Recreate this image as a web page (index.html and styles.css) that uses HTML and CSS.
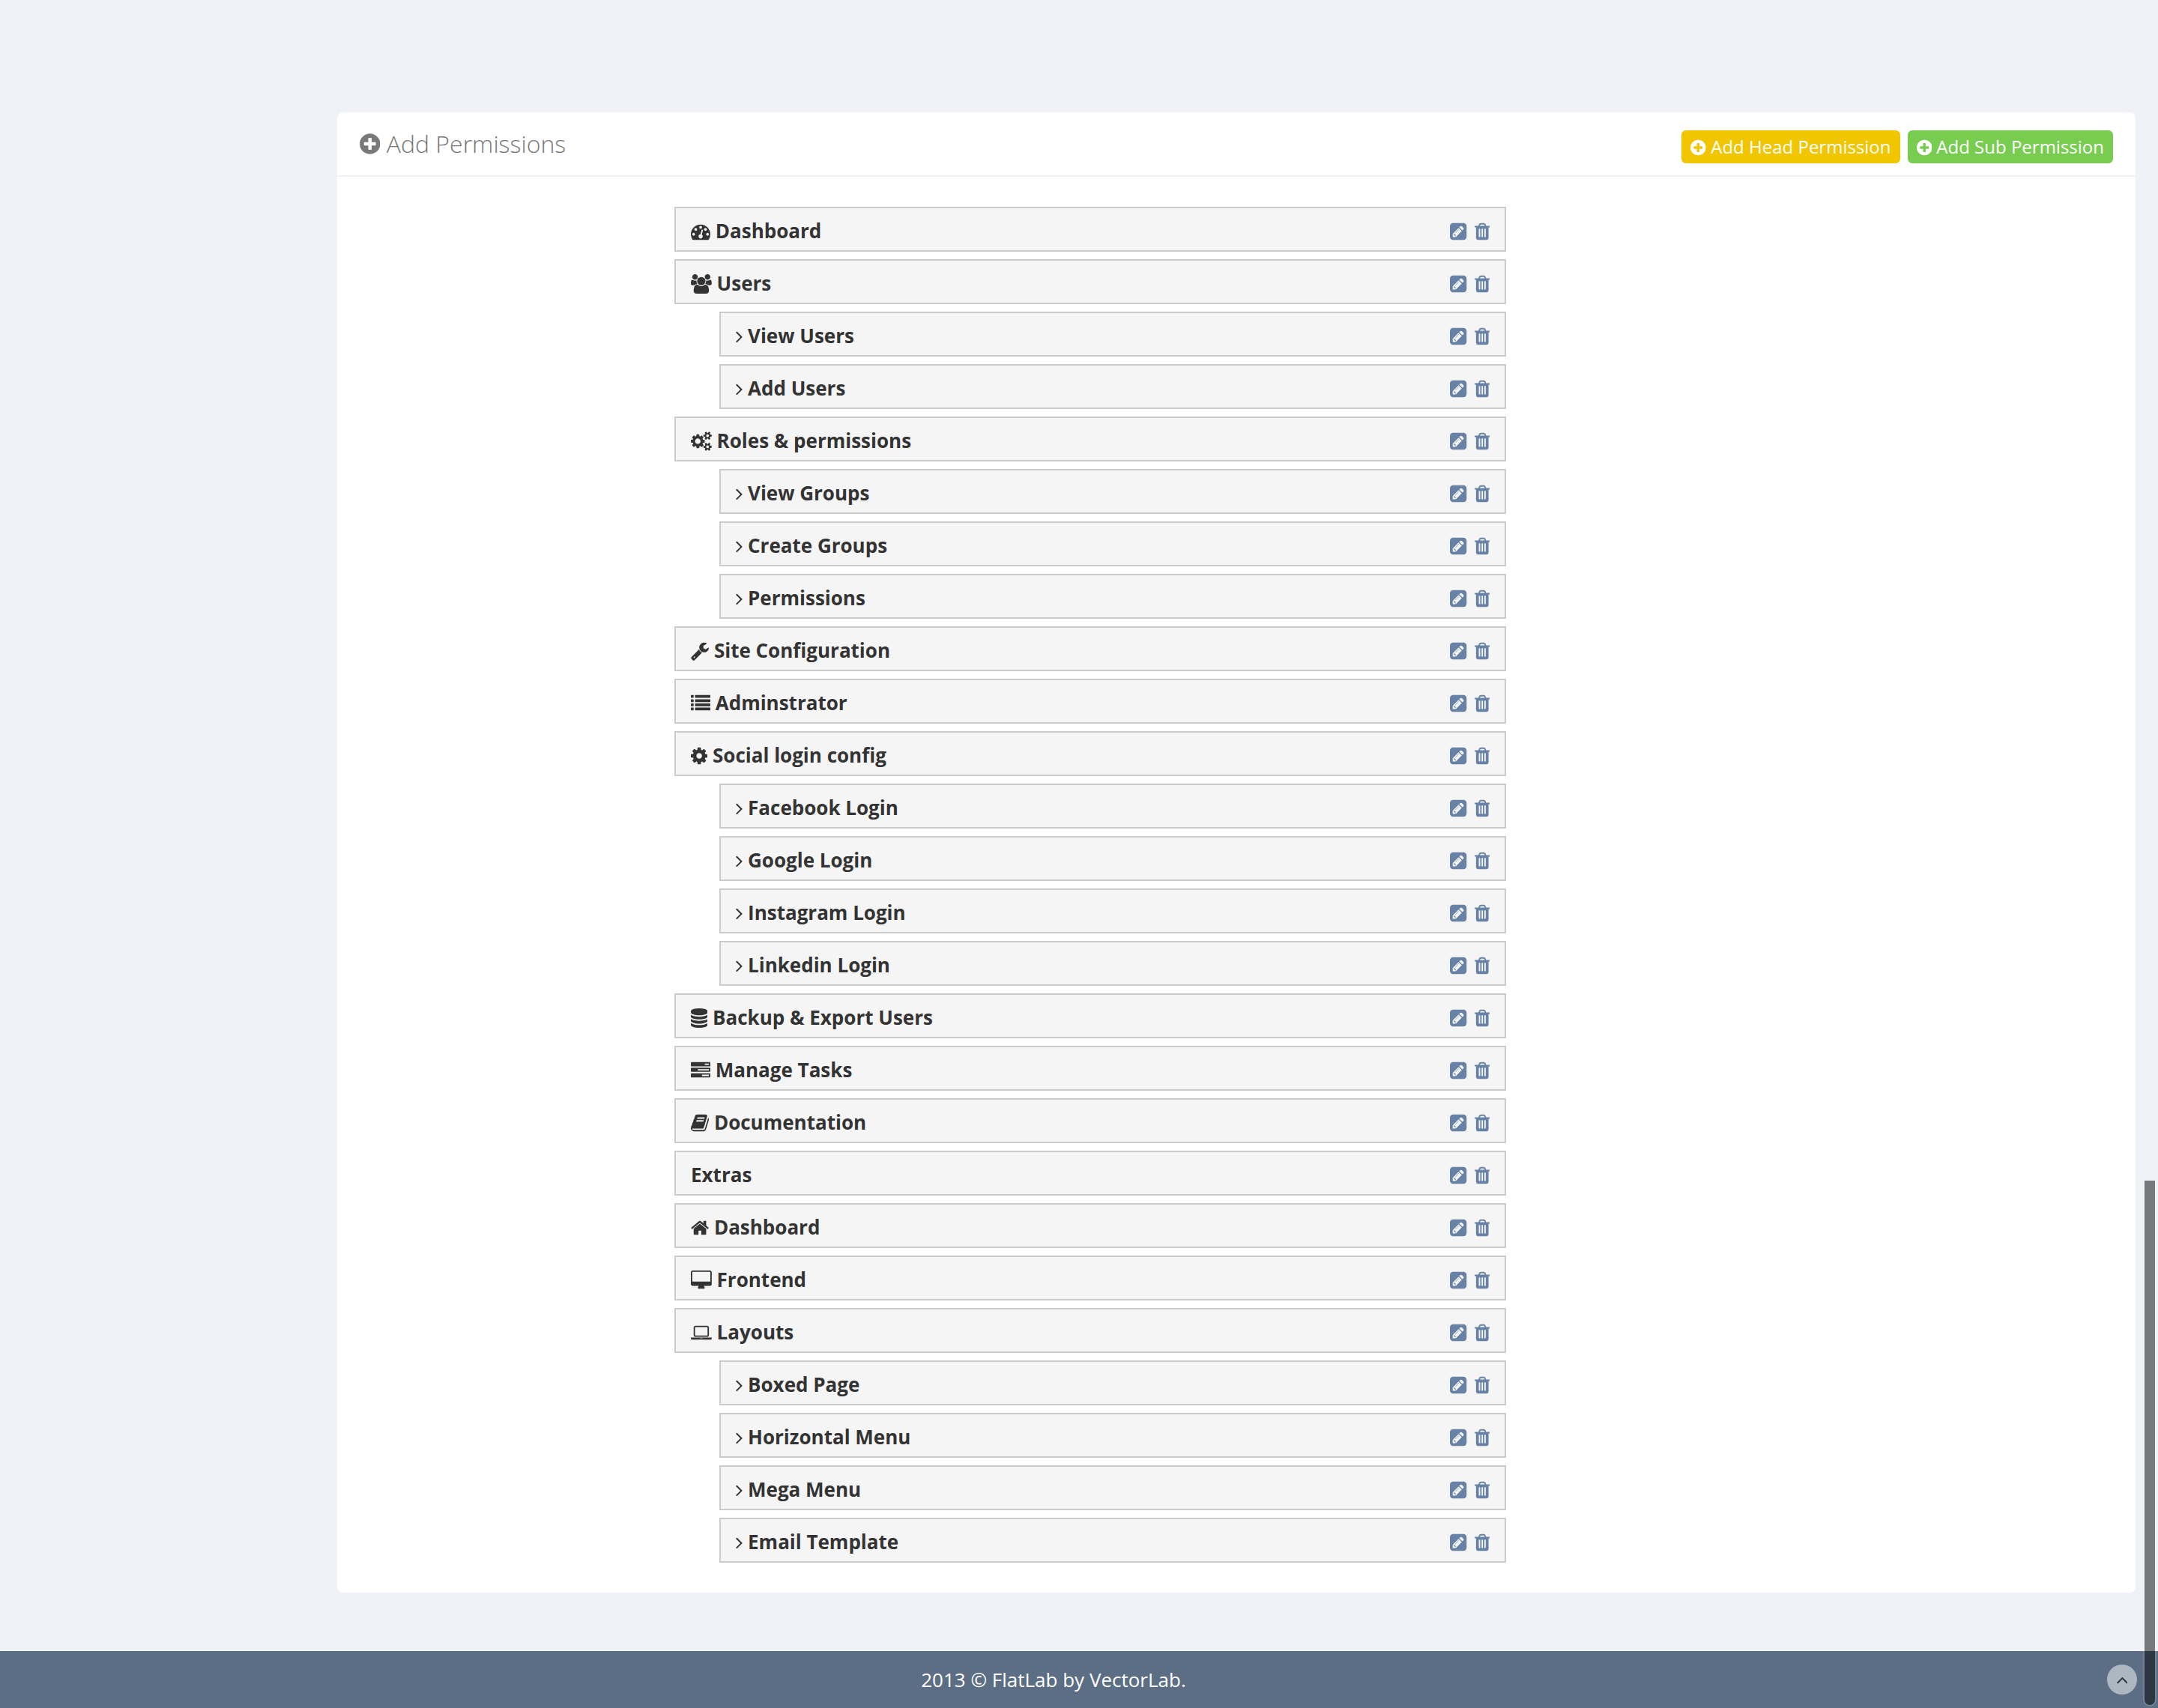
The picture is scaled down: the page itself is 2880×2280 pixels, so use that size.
FILE: index.html
```html
<!DOCTYPE html>
<html lang="en">
<head>
<meta charset="utf-8">
<meta name="viewport" content="width=device-width, initial-scale=1">
<title>Add Permissions</title>
<link rel="stylesheet" href="styles.css">
</head>
<body>
<svg class="sprite" aria-hidden="true">
<defs>
<path id="i-dash" d="M384 1152q0-53-37.5-90.5t-90.5-37.5-90.5 37.5-37.5 90.5 37.5 90.5 90.5 37.5 90.5-37.5 37.5-90.5zm192-448q0-53-37.5-90.5t-90.5-37.5-90.5 37.5-37.5 90.5 37.5 90.5 90.5 37.5 90.5-37.5 37.5-90.5zm428 481l101-382q6-26-7.5-48.5t-38.5-29.5-48 6.5-30 39.5l-101 382q-60 5-107 43.5t-63 98.5q-20 77 20 146t117 89 146-20 89-117q16-60-6-117t-72-91zm660-33q0-53-37.5-90.5t-90.5-37.5-90.5 37.5-37.5 90.5 37.5 90.5 90.5 37.5 90.5-37.5 37.5-90.5zm-640-640q0-53-37.5-90.5t-90.5-37.5-90.5 37.5-37.5 90.5 37.5 90.5 90.5 37.5 90.5-37.5 37.5-90.5zm448 192q0-53-37.5-90.5t-90.5-37.5-90.5 37.5-37.5 90.5 37.5 90.5 90.5 37.5 90.5-37.5 37.5-90.5zm320 448q0 261-141 483-19 29-54 29h-1402q-35 0-54-29-141-221-141-483 0-182 71-348t191-286 286-191 348-71 348 71 286 191 191 286 71 348z"/>
<path id="i-users" d="M529 896q-162 5-265 128h-134q-82 0-138-40.5t-56-118.5q0-353 124-353 6 0 43.5 21t97.5 42.5 119 21.5q67 0 133-23-5 37-5 66 0 139 81 256zm1071 637q0 120-73 189.5t-194 69.5h-874q-121 0-194-69.5t-73-189.5q0-53 3.5-103.5t14-109 26.5-108.5 43-97.5 62-81 85.5-53.5 111.5-20q10 0 43 21.5t73 48 107 48 135 21.5 135-21.5 107-48 73-48 43-21.5q61 0 111.5 20t85.5 53.5 62 81 43 97.5 26.5 108.5 14 109 3.5 103.5zm-1024-1277q0 106-75 181t-181 75-181-75-75-181 75-181 181-75 181 75 75 181zm704 384q0 159-112.5 271.5t-271.5 112.5-271.5-112.5-112.5-271.5 112.5-271.5 271.5-112.5 271.5 112.5 112.5 271.5zm576 225q0 78-56 118.5t-138 40.5h-134q-103-123-265-128 81-117 81-256 0-29-5-66 66 23 133 23 59 0 119-21.5t97.5-42.5 43.5-21q124 0 124 353zm-128-609q0 106-75 181t-181 75-181-75-75-181 75-181 181-75 181 75 75 181z"/>
<path id="i-cogs" d="M832 896q0-106-75-181t-181-75-181 75-75 181 75 181 181 75 181-75 75-181zm768 512q0-52-38-90t-90-38-90 38-38 90q0 53 37.5 90.5t90.5 37.5 90.5-37.5 37.5-90.5zm0-1024q0-52-38-90t-90-38-90 38-38 90q0 53 37.5 90.5t90.5 37.5 90.5-37.5 37.5-90.5zm-384 421v185q0 10-7 19.5t-16 10.5l-155 24q-11 35-32 76 34 48 90 115 7 11 7 20 0 12-7 19-23 30-82.5 89.5t-78.5 59.5q-11 0-21-7l-115-90q-37 19-77 31-11 108-23 155-7 24-30 24h-186q-11 0-20-7.5t-10-17.5l-23-153q-34-10-75-31l-118 89q-7 7-20 7-11 0-21-8-144-133-144-160 0-9 7-19 10-14 41-53t47-61q-23-44-35-82l-152-24q-10-1-17-9.5t-7-19.5v-185q0-10 7-19.5t16-10.5l155-24q11-35 32-76-34-48-90-115-7-11-7-20 0-12 7-20 22-30 82-89t79-59q11 0 21 7l115 90q34-18 77-32 11-108 23-154 7-24 30-24h186q11 0 20 7.5t10 17.5l23 153q34 10 75 31l118-89q8-7 20-7 11 0 21 8 144 133 144 160 0 8-7 19-12 16-42 54t-45 60q23 48 34 82l152 23q10 2 17 10.5t7 19.5zm640 533v140q0 16-149 31-12 27-30 52 51 113 51 138 0 4-4 7-122 71-124 71-8 0-46-47t-52-68q-20 2-30 2t-30-2q-14 21-52 68t-46 47q-2 0-124-71-4-3-4-7 0-25 51-138-18-25-30-52-149-15-149-31v-140q0-16 149-31 13-29 30-52-51-113-51-138 0-4 4-7 4-2 35-20t59-34 30-16q8 0 46 46.5t52 67.5q20-2 30-2t30 2q51-71 92-112l6-2q4 0 124 70 4 3 4 7 0 25-51 138 17 23 30 52 149 15 149 31zm0-1024v140q0 16-149 31-12 27-30 52 51 113 51 138 0 4-4 7-122 71-124 71-8 0-46-47t-52-68q-20 2-30 2t-30-2q-14 21-52 68t-46 47q-2 0-124-71-4-3-4-7 0-25 51-138-18-25-30-52-149-15-149-31v-140q0-16 149-31 13-29 30-52-51-113-51-138 0-4 4-7 4-2 35-20t59-34 30-16q8 0 46 46.5t52 67.5q20-2 30-2t30 2q51-71 92-112l6-2q4 0 124 70 4 3 4 7 0 25-51 138 17 23 30 52 149 15 149 31z"/>
<path id="i-wrench" d="M448 1472q0-26-19-45t-45-19-45 19-19 45 19 45 45 19 45-19 19-45zm644-420l-682 682q-37 37-90 37-52 0-91-37l-106-108q-38-36-38-90 0-53 38-91l681-681q39 98 114.5 173.5t173.5 114.5zm634-435q0 39-23 106-47 134-164.5 217.5t-258.5 83.5q-185 0-316.5-131.5t-131.5-316.5 131.5-316.5 316.5-131.5q58 0 121.5 16.5t107.5 46.5q16 11 16 28t-16 28l-293 169v224l193 107q5-3 79-48.5t135.5-81 70.5-35.5q15 0 23.5 10t8.5 25z"/>
<g id="i-list"><rect x="0" y="128" width="256" height="256" rx="32"/><rect x="0" y="512" width="256" height="256" rx="32"/><rect x="0" y="896" width="256" height="256" rx="32"/><rect x="0" y="1280" width="256" height="256" rx="32"/><rect x="384" y="128" width="1408" height="256" rx="32"/><rect x="384" y="512" width="1408" height="256" rx="32"/><rect x="384" y="896" width="1408" height="256" rx="32"/><rect x="384" y="1280" width="1408" height="256" rx="32"/></g>
<path id="i-cog" d="M1152 896q0-106-75-181t-181-75-181 75-75 181 75 181 181 75 181-75 75-181zm512-109v222q0 12-8 23t-20 13l-185 28q-19 54-39 91 35 50 107 138 10 12 10 25t-9 23q-27 37-99 108t-94 71q-12 0-26-9l-138-108q-44 23-91 38-16 136-29 186-7 28-36 28h-222q-14 0-24.5-8.5t-11.5-21.5l-28-184q-49-16-90-37l-141 107q-10 9-25 9-14 0-25-11-126-114-165-168-7-10-7-23 0-12 8-23 15-21 51-66.5t54-70.5q-27-50-41-99l-183-27q-13-2-21-12.5t-8-23.5v-222q0-12 8-23t19-13l186-28q14-46 39-92-40-57-107-138-10-12-10-24 0-10 9-23 26-36 98.5-107.5t94.5-71.5q13 0 26 10l138 107q44-23 91-38 16-136 29-186 7-28 36-28h222q14 0 24.5 8.5t11.5 21.5l28 184q49 16 90 37l142-107q9-9 24-9 13 0 25 10 129 119 165 170 7 8 7 22 0 12-8 23-15 21-51 66.5t-54 70.5q26 50 41 98l183 28q13 2 21 12.5t8 23.5z"/>
<path id="i-database" d="M896 768q237 0 443-43t325-127v170q0 69-103 128t-280 93.5-385 34.5-385-34.5-280-93.5-103-128v-170q119 84 325 127t443 43zm0 768q237 0 443-43t325-127v170q0 69-103 128t-280 93.5-385 34.5-385-34.5-280-93.5-103-128v-170q119 84 325 127t443 43zm0-384q237 0 443-43t325-127v170q0 69-103 128t-280 93.5-385 34.5-385-34.5-280-93.5-103-128v-170q119 84 325 127t443 43zm0-1152q208 0 385 34.5t280 93.5 103 128v128q0 69-103 128t-280 93.5-385 34.5-385-34.5-280-93.5-103-128v-128q0-69 103-128t280-93.5 385-34.5z"/>
<path id="i-tasks" d="M1024 1408h640v-128h-640v128zm-384-512h1024v-128h-1024v128zm640-512h384v-128h-384v128zm512 832v256q0 26-19 45t-45 19h-1664q-26 0-45-19t-19-45v-256q0-26 19-45t45-19h1664q26 0 45 19t19 45zm0-512v256q0 26-19 45t-45 19h-1664q-26 0-45-19t-19-45v-256q0-26 19-45t45-19h1664q26 0 45 19t19 45zm0-512v256q0 26-19 45t-45 19h-1664q-26 0-45-19t-19-45v-256q0-26 19-45t45-19h1664q26 0 45 19t19 45z"/>
<path id="i-book" d="M1703 478q40 57 18 129l-275 906q-19 64-76.5 107.5t-122.5 43.5h-923q-77 0-148.5-53.5t-99.5-131.5q-24-67-2-127 0-4 3-27t4-37q1-8-3-21.5t-3-19.5q2-11 8-21t16.5-23.5 16.5-23.5q23-38 45-91.5t30-91.5q3-10 .5-30t-.5-28q3-11 17-28t17-23q21-36 42-92t25-90q1-9-2.5-32t.5-28q4-13 22-30.5t22-22.5q19-26 42.5-84.5t27.5-96.5q1-8-3-25.5t-2-26.5q2-8 9-18t18-23 17-21q8-12 16.5-30.5t15-35 16-36 19.5-32 26.5-23.5 36-11.5 47.5 5.5l-1 3q38-9 51-9h761q74 0 114 56t18 130l-274 906q-36 119-71.5 153.5t-128.5 34.5h-869q-27 0-38 15-11 16-1 43 24 70 144 70h923q29 0 56-15.5t35-41.5l300-987q7-22 5-57 38 15 59 43zm-1064 2q-4 13 2 22.5t20 9.5h608q13 0 25.5-9.5t16.5-22.5l21-64q4-13-2-22.5t-20-9.5h-608q-13 0-25.5 9.5t-16.5 22.5zm-83 256q-4 13 2 22.5t20 9.5h608q13 0 25.5-9.5t16.5-22.5l21-64q4-13-2-22.5t-20-9.5h-608q-13 0-25.5 9.5t-16.5 22.5z"/>
<path id="i-home" d="M1472 992v480q0 26-19 45t-45 19h-384v-384h-256v384h-384q-26 0-45-19t-19-45v-480q0-1 .5-3t.5-3l575-474 575 474q1 2 1 6zm223-69l-62 74q-8 9-21 11h-3q-13 0-21-7l-692-577-692 577q-12 8-24 7-13-2-21-11l-62-74q-8-10-7-23.5t11-21.5l719-599q32-26 76-26t76 26l244 204v-195q0-14 9-23t23-9h192q14 0 23 9t9 23v408l219 182q10 8 11 21.5t-7 23.5z"/>
<path id="i-desktop" d="M1728 992v-832q0-13-9.5-22.5t-22.5-9.5h-1600q-13 0-22.5 9.5t-9.5 22.5v832q0 13 9.5 22.5t22.5 9.5h1600q13 0 22.5-9.5t9.5-22.5zm128-832v1088q0 66-47 113t-113 47h-544q0 37 16 77.5t32 71 16 43.5q0 26-19 45t-45 19h-512q-26 0-45-19t-19-45q0-14 16-44t32-70 16-78h-544q-66 0-113-47t-47-113v-1088q0-66 47-113t113-47h1600q66 0 113 47t47 113z"/>
<path id="i-laptop" d="M352 1280q-66 0-113-47t-47-113v-704q0-66 47-113t113-47h1088q66 0 113 47t47 113v704q0 66-47 113t-113 47h-1088zm-32-864v704q0 13 9.5 22.5t22.5 9.5h1088q13 0 22.5-9.5t9.5-22.5v-704q0-13-9.5-22.5t-22.5-9.5h-1088q-13 0-22.5 9.5t-9.5 22.5zm1376 928h160v96q0 40-47 68t-113 28h-1600q-66 0-113-28t-47-68v-96h1760zm-720 96q16 0 16-16t-16-16h-160q-16 0-16 16t16 16h160z"/>
<path id="i-angle" d="M1171 960q0 13-10 23l-466 466q-10 10-23 10t-23-10l-50-50q-10-10-10-23t10-23l393-393-393-393q-10-10-10-23t10-23l50-50q10-10 23-10t23 10l466 466q10 10 10 23z"/>
<path id="i-up" d="M1395 1184q0 13-10 23l-50 50q-10 10-23 10t-23-10l-393-393-393 393q-10 10-23 10t-23-10l-50-50q-10-10-10-23t10-23l466-466q10-10 23-10t23 10l466 466q10 10 10 23z"/>
<path id="i-plus" d="M1344 960v-128q0-26-19-45t-45-19h-256v-256q0-26-19-45t-45-19h-128q-26 0-45 19t-19 45v256h-256q-26 0-45 19t-19 45v128q0 26 19 45t45 19h256v256q0 26 19 45t45 19h128q26 0 45-19t19-45v-256h256q26 0 45-19t19-45zm320-64q0 209-103 385.5t-279.5 279.5-385.5 103-385.5-103-279.5-279.5-103-385.5 103-385.5 279.5-279.5 385.5-103 385.5 103 279.5 279.5 103 385.5z"/>
<path id="i-edit" d="M404 1108l152 152-52 52h-56v-96h-96v-56zm414-390q14 13-3 30l-291 291q-17 17-30 3-14-13 3-30l291-291q17-17 30-3zm-274 690l544-544-288-288-544 544v288h288zm608-608l92-92q28-28 28-68t-28-68l-152-152q-28-28-68-28t-68 28l-92 92zm384-384v960q0 119-84.5 203.5t-203.5 84.5h-960q-119 0-203.5-84.5t-84.5-203.5v-960q0-119 84.5-203.5t203.5-84.5h960q119 0 203.5 84.5t84.5 203.5z"/>
<path id="i-trash" d="M704 1376v-704q0-14-9-23t-23-9h-64q-14 0-23 9t-9 23v704q0 14 9 23t23 9h64q14 0 23-9t9-23zm256 0v-704q0-14-9-23t-23-9h-64q-14 0-23 9t-9 23v704q0 14 9 23t23 9h64q14 0 23-9t9-23zm256 0v-704q0-14-9-23t-23-9h-64q-14 0-23 9t-9 23v704q0 14 9 23t23 9h64q14 0 23-9t9-23zm-544-992h448l-48-117q-7-9-17-11h-317q-10 2-17 11zm928 32v64q0 14-9 23t-23 9h-96v948q0 83-47 143.5t-113 60.5h-832q-66 0-113-58.5t-47-141.5v-952h-96q-14 0-23-9t-9-23v-64q0-14 9-23t23-9h309l70-167q15-37 54-63t79-26h320q40 0 79 26t54 63l70 167h309q14 0 23 9t9 23z"/>
</defs>
</svg>

<main class="content">
<section class="panel">
<header class="panel-head">
<h1 class="panel-title"><svg class="icon icon-lg" viewBox="128 0 1536 1792"><use href="#i-plus"/></svg> Add Permissions</h1>
<div class="panel-tools">
<button type="button" class="btn btn-warning"><svg class="icon icon-sm" viewBox="128 0 1536 1792"><use href="#i-plus"/></svg> Add Head Permission</button>
<button type="button" class="btn btn-success"><svg class="icon icon-sm" viewBox="128 0 1536 1792"><use href="#i-plus"/></svg> Add Sub Permission</button>
</div>
</header>
<div class="panel-body">
<ol class="tree">
<li><div class="node"><span class="label"><svg class="icon" viewBox="0 0 1792 1792"><use href="#i-dash"/></svg> Dashboard</span><a href="#" aria-label="Edit"><svg class="icon" viewBox="0 0 1536 1792"><use href="#i-edit"/></svg></a><a href="#" aria-label="Delete"><svg class="icon" viewBox="192 0 1408 1792"><use href="#i-trash"/></svg></a></div></li>
<li><div class="node"><span class="label"><svg class="icon" viewBox="-64 0 1920 1792"><use href="#i-users"/></svg> Users</span><a href="#" aria-label="Edit"><svg class="icon" viewBox="0 0 1536 1792"><use href="#i-edit"/></svg></a><a href="#" aria-label="Delete"><svg class="icon" viewBox="192 0 1408 1792"><use href="#i-trash"/></svg></a></div>
<ol class="tree subtree">
<li><div class="node"><span class="label"><svg class="icon" viewBox="576 0 640 1792"><use href="#i-angle"/></svg> View Users</span><a href="#" aria-label="Edit"><svg class="icon" viewBox="0 0 1536 1792"><use href="#i-edit"/></svg></a><a href="#" aria-label="Delete"><svg class="icon" viewBox="192 0 1408 1792"><use href="#i-trash"/></svg></a></div></li>
<li><div class="node"><span class="label"><svg class="icon" viewBox="576 0 640 1792"><use href="#i-angle"/></svg> Add Users</span><a href="#" aria-label="Edit"><svg class="icon" viewBox="0 0 1536 1792"><use href="#i-edit"/></svg></a><a href="#" aria-label="Delete"><svg class="icon" viewBox="192 0 1408 1792"><use href="#i-trash"/></svg></a></div></li>
</ol></li>
<li><div class="node"><span class="label"><svg class="icon" viewBox="-64 0 1920 1792"><use href="#i-cogs"/></svg> Roles &amp; permissions</span><a href="#" aria-label="Edit"><svg class="icon" viewBox="0 0 1536 1792"><use href="#i-edit"/></svg></a><a href="#" aria-label="Delete"><svg class="icon" viewBox="192 0 1408 1792"><use href="#i-trash"/></svg></a></div>
<ol class="tree subtree">
<li><div class="node"><span class="label"><svg class="icon" viewBox="576 0 640 1792"><use href="#i-angle"/></svg> View Groups</span><a href="#" aria-label="Edit"><svg class="icon" viewBox="0 0 1536 1792"><use href="#i-edit"/></svg></a><a href="#" aria-label="Delete"><svg class="icon" viewBox="192 0 1408 1792"><use href="#i-trash"/></svg></a></div></li>
<li><div class="node"><span class="label"><svg class="icon" viewBox="576 0 640 1792"><use href="#i-angle"/></svg> Create Groups</span><a href="#" aria-label="Edit"><svg class="icon" viewBox="0 0 1536 1792"><use href="#i-edit"/></svg></a><a href="#" aria-label="Delete"><svg class="icon" viewBox="192 0 1408 1792"><use href="#i-trash"/></svg></a></div></li>
<li><div class="node"><span class="label"><svg class="icon" viewBox="576 0 640 1792"><use href="#i-angle"/></svg> Permissions</span><a href="#" aria-label="Edit"><svg class="icon" viewBox="0 0 1536 1792"><use href="#i-edit"/></svg></a><a href="#" aria-label="Delete"><svg class="icon" viewBox="192 0 1408 1792"><use href="#i-trash"/></svg></a></div></li>
</ol></li>
<li><div class="node"><span class="label"><svg class="icon" viewBox="64 0 1664 1792"><use href="#i-wrench"/></svg> Site Configuration</span><a href="#" aria-label="Edit"><svg class="icon" viewBox="0 0 1536 1792"><use href="#i-edit"/></svg></a><a href="#" aria-label="Delete"><svg class="icon" viewBox="192 0 1408 1792"><use href="#i-trash"/></svg></a></div></li>
<li><div class="node"><span class="label"><svg class="icon" viewBox="0 0 1792 1792"><use href="#i-list"/></svg> Adminstrator</span><a href="#" aria-label="Edit"><svg class="icon" viewBox="0 0 1536 1792"><use href="#i-edit"/></svg></a><a href="#" aria-label="Delete"><svg class="icon" viewBox="192 0 1408 1792"><use href="#i-trash"/></svg></a></div></li>
<li><div class="node"><span class="label"><svg class="icon" viewBox="128 0 1536 1792"><use href="#i-cog"/></svg> Social login config</span><a href="#" aria-label="Edit"><svg class="icon" viewBox="0 0 1536 1792"><use href="#i-edit"/></svg></a><a href="#" aria-label="Delete"><svg class="icon" viewBox="192 0 1408 1792"><use href="#i-trash"/></svg></a></div>
<ol class="tree subtree">
<li><div class="node"><span class="label"><svg class="icon" viewBox="576 0 640 1792"><use href="#i-angle"/></svg> Facebook Login</span><a href="#" aria-label="Edit"><svg class="icon" viewBox="0 0 1536 1792"><use href="#i-edit"/></svg></a><a href="#" aria-label="Delete"><svg class="icon" viewBox="192 0 1408 1792"><use href="#i-trash"/></svg></a></div></li>
<li><div class="node"><span class="label"><svg class="icon" viewBox="576 0 640 1792"><use href="#i-angle"/></svg> Google Login</span><a href="#" aria-label="Edit"><svg class="icon" viewBox="0 0 1536 1792"><use href="#i-edit"/></svg></a><a href="#" aria-label="Delete"><svg class="icon" viewBox="192 0 1408 1792"><use href="#i-trash"/></svg></a></div></li>
<li><div class="node"><span class="label"><svg class="icon" viewBox="576 0 640 1792"><use href="#i-angle"/></svg> Instagram Login</span><a href="#" aria-label="Edit"><svg class="icon" viewBox="0 0 1536 1792"><use href="#i-edit"/></svg></a><a href="#" aria-label="Delete"><svg class="icon" viewBox="192 0 1408 1792"><use href="#i-trash"/></svg></a></div></li>
<li><div class="node"><span class="label"><svg class="icon" viewBox="576 0 640 1792"><use href="#i-angle"/></svg> Linkedin Login</span><a href="#" aria-label="Edit"><svg class="icon" viewBox="0 0 1536 1792"><use href="#i-edit"/></svg></a><a href="#" aria-label="Delete"><svg class="icon" viewBox="192 0 1408 1792"><use href="#i-trash"/></svg></a></div></li>
</ol></li>
<li><div class="node"><span class="label"><svg class="icon" viewBox="128 0 1536 1792"><use href="#i-database"/></svg> Backup &amp; Export Users</span><a href="#" aria-label="Edit"><svg class="icon" viewBox="0 0 1536 1792"><use href="#i-edit"/></svg></a><a href="#" aria-label="Delete"><svg class="icon" viewBox="192 0 1408 1792"><use href="#i-trash"/></svg></a></div></li>
<li><div class="node"><span class="label"><svg class="icon" viewBox="0 0 1792 1792"><use href="#i-tasks"/></svg> Manage Tasks</span><a href="#" aria-label="Edit"><svg class="icon" viewBox="0 0 1536 1792"><use href="#i-edit"/></svg></a><a href="#" aria-label="Delete"><svg class="icon" viewBox="192 0 1408 1792"><use href="#i-trash"/></svg></a></div></li>
<li><div class="node"><span class="label"><svg class="icon" viewBox="64 0 1664 1792"><use href="#i-book"/></svg> Documentation</span><a href="#" aria-label="Edit"><svg class="icon" viewBox="0 0 1536 1792"><use href="#i-edit"/></svg></a><a href="#" aria-label="Delete"><svg class="icon" viewBox="192 0 1408 1792"><use href="#i-trash"/></svg></a></div></li>
<li><div class="node"><span class="label">Extras</span><a href="#" aria-label="Edit"><svg class="icon" viewBox="0 0 1536 1792"><use href="#i-edit"/></svg></a><a href="#" aria-label="Delete"><svg class="icon" viewBox="192 0 1408 1792"><use href="#i-trash"/></svg></a></div></li>
<li><div class="node"><span class="label"><svg class="icon" viewBox="64 0 1664 1792"><use href="#i-home"/></svg> Dashboard</span><a href="#" aria-label="Edit"><svg class="icon" viewBox="0 0 1536 1792"><use href="#i-edit"/></svg></a><a href="#" aria-label="Delete"><svg class="icon" viewBox="192 0 1408 1792"><use href="#i-trash"/></svg></a></div></li>
<li><div class="node"><span class="label"><svg class="icon" viewBox="-64 0 1920 1792"><use href="#i-desktop"/></svg> Frontend</span><a href="#" aria-label="Edit"><svg class="icon" viewBox="0 0 1536 1792"><use href="#i-edit"/></svg></a><a href="#" aria-label="Delete"><svg class="icon" viewBox="192 0 1408 1792"><use href="#i-trash"/></svg></a></div></li>
<li><div class="node"><span class="label"><svg class="icon" viewBox="-64 0 1920 1792"><use href="#i-laptop"/></svg> Layouts</span><a href="#" aria-label="Edit"><svg class="icon" viewBox="0 0 1536 1792"><use href="#i-edit"/></svg></a><a href="#" aria-label="Delete"><svg class="icon" viewBox="192 0 1408 1792"><use href="#i-trash"/></svg></a></div>
<ol class="tree subtree">
<li><div class="node"><span class="label"><svg class="icon" viewBox="576 0 640 1792"><use href="#i-angle"/></svg> Boxed Page</span><a href="#" aria-label="Edit"><svg class="icon" viewBox="0 0 1536 1792"><use href="#i-edit"/></svg></a><a href="#" aria-label="Delete"><svg class="icon" viewBox="192 0 1408 1792"><use href="#i-trash"/></svg></a></div></li>
<li><div class="node"><span class="label"><svg class="icon" viewBox="576 0 640 1792"><use href="#i-angle"/></svg> Horizontal Menu</span><a href="#" aria-label="Edit"><svg class="icon" viewBox="0 0 1536 1792"><use href="#i-edit"/></svg></a><a href="#" aria-label="Delete"><svg class="icon" viewBox="192 0 1408 1792"><use href="#i-trash"/></svg></a></div></li>
<li><div class="node"><span class="label"><svg class="icon" viewBox="576 0 640 1792"><use href="#i-angle"/></svg> Mega Menu</span><a href="#" aria-label="Edit"><svg class="icon" viewBox="0 0 1536 1792"><use href="#i-edit"/></svg></a><a href="#" aria-label="Delete"><svg class="icon" viewBox="192 0 1408 1792"><use href="#i-trash"/></svg></a></div></li>
<li><div class="node"><span class="label"><svg class="icon" viewBox="576 0 640 1792"><use href="#i-angle"/></svg> Email Template</span><a href="#" aria-label="Edit"><svg class="icon" viewBox="0 0 1536 1792"><use href="#i-edit"/></svg></a><a href="#" aria-label="Delete"><svg class="icon" viewBox="192 0 1408 1792"><use href="#i-trash"/></svg></a></div></li>
</ol></li>
</ol>
</div>
</section>
</main>

<footer class="site-footer">
<p class="copyright">2013 © FlatLab by VectorLab.</p>
<a href="#" class="go-top" aria-label="Back to top"><svg class="icon" viewBox="384 0 1024 1792"><use href="#i-up"/></svg></a>
</footer>
<div class="scroll-thumb"></div>
</body>
</html>
```

FILE: styles.css
```css
* {
  box-sizing: border-box;
}

html {
  scrollbar-width: none;
}

body {
  margin: 0;
  background: #f1f2f7;
  color: #333;
  font-family: "Open Sans", sans-serif;
  font-size: 26px;
  line-height: 36px;
}

.sprite {
  display: none;
}

.icon {
  height: 26px;
  vertical-align: -4px;
  fill: currentColor;
}

.icon-lg {
  height: 32px;
}

.icon-sm {
  height: 24px;
}

.content {
  padding: 150px 30px 78px 450px;
}

.panel {
  background: #fff;
  border-radius: 8px;
}

.panel-head {
  display: flex;
  justify-content: space-between;
  align-items: flex-start;
  padding: 20px 30px 16px;
  border-bottom: 2px solid #eff2f7;
}

.panel-title {
  margin: 0;
  color: #797979;
  font-size: 32px;
  font-weight: 300;
  line-height: 44px;
}

.panel-tools {
  display: flex;
  gap: 10px;
  padding-top: 4px;
}

.btn {
  padding: 2px 10px;
  border: 2px solid transparent;
  border-radius: 6px;
  color: #fff;
  font-family: inherit;
  font-size: 24px;
  line-height: 36px;
}

.btn-warning {
  background: #f1c500;
  border-color: #f1c500;
}

.btn-success {
  background: #78cd51;
  border-color: #78cd51;
}

.panel-body {
  display: grid;
  grid-template-columns: 42fr 111fr 81fr;
  padding: 40px 30px;
}

.tree {
  display: flex;
  flex-direction: column;
  gap: 10px;
  margin: 0;
  padding: 0;
  list-style: none;
}

.panel-body > .tree {
  grid-column: 2;
}

.subtree {
  padding: 10px 0 0 60px;
}

.node {
  display: flex;
  gap: 10px;
  padding: 12px 20px 8px;
  background: #f5f5f5;
  border: 2px solid #ccc;
  font-weight: 700;
}

.label {
  flex: 1;
}

.node a {
  color: #6782a5;
}

.site-footer {
  display: flex;
  align-items: center;
  padding: 18px 28px 18px 0;
  background: #5b6e84;
  color: #fff;
}

.copyright {
  flex: 1;
  margin: 0;
  text-align: center;
}

.go-top {
  display: flex;
  align-items: center;
  justify-content: center;
  width: 40px;
  height: 40px;
  border-radius: 50%;
  background: #adb7c2;
  color: #2c3641;
}

.scroll-thumb {
  position: fixed;
  right: 2px;
  bottom: 2px;
  width: 18px;
  height: 702px;
  border: 2px solid rgba(255, 255, 255, 0.15);
  border-top: 0;
  border-radius: 0 0 9px 9px;
  background: rgba(0, 0, 0, 0.5);
  background-clip: padding-box;
}
```
